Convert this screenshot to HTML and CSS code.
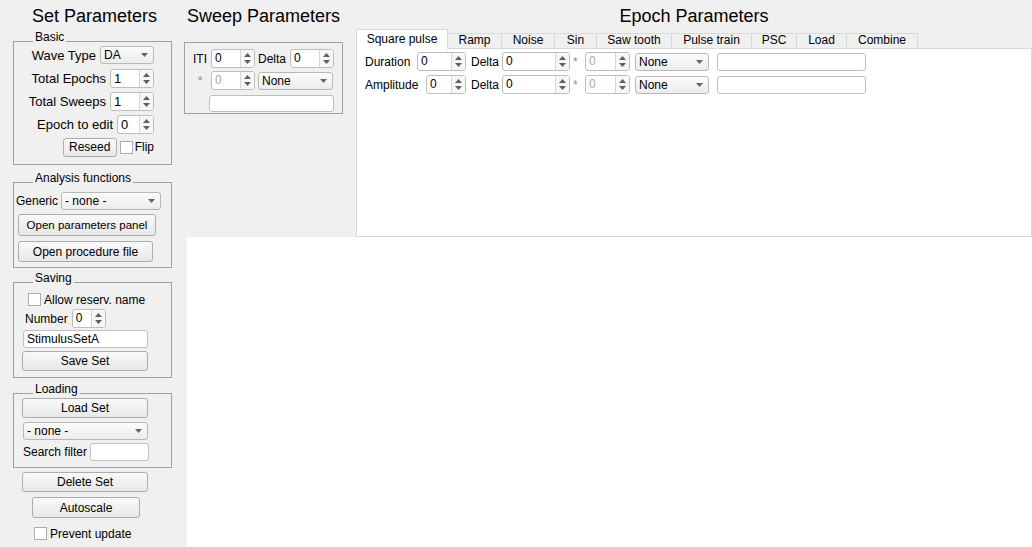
FILE: index.html
```html
<!DOCTYPE html>
<html>
<head>
<meta charset="utf-8">
<title>Set Parameters</title>
<link rel="stylesheet" href="styles.css">
</head>
<body>
<div class="app">
  <aside class="left">
    <h1 class="title">Set Parameters</h1>

    <div class="group g-basic">
      <div class="gtitle">Basic</div>
      <div class="rows">
        <div class="row"><span>Wave Type</span><div class="select w54"><span>DA</span><svg class="caret" width="7" height="4" viewBox="0 0 7 4"><path d="M0 0H7L3.5 4Z" fill="#666"/></svg></div></div>
        <div class="row"><span>Total Epochs</span><div class="spin w44 big"><span class="v">1</span><span class="arr"><svg width="7" height="11" viewBox="0 0 7 11"><path d="M0 4L3.5 0L7 4Z M0 7L3.5 11L7 7Z" fill="#5f5f5f"/></svg></span></div></div>
        <div class="row"><span>Total Sweeps</span><div class="spin w44 big"><span class="v">1</span><span class="arr"><svg width="7" height="11" viewBox="0 0 7 11"><path d="M0 4L3.5 0L7 4Z M0 7L3.5 11L7 7Z" fill="#5f5f5f"/></svg></span></div></div>
        <div class="row"><span>Epoch to edit</span><div class="spin w37 big"><span class="v">0</span><span class="arr"><svg width="7" height="11" viewBox="0 0 7 11"><path d="M0 4L3.5 0L7 4Z M0 7L3.5 11L7 7Z" fill="#5f5f5f"/></svg></span></div></div>
        <div class="row row5"><button class="btn w54 h19">Reseed</button><span class="cb"></span><span class="flip">Flip</span></div>
      </div>
    </div>

    <div class="group g-ana">
      <div class="gtitle">Analysis functions</div>
      <div class="body ana-body">
        <div class="row gen"><span>Generic</span><div class="select w100"><span>- none -</span><svg class="caret" width="7" height="4" viewBox="0 0 7 4"><path d="M0 0H7L3.5 4Z" fill="#666"/></svg></div></div>
        <button class="btn b1">Open parameters panel</button>
        <button class="btn b2">Open procedure file</button>
      </div>
    </div>

    <div class="group g-save">
      <div class="gtitle">Saving</div>
      <div class="body save-body">
        <div class="chk-row cr-allow"><span class="cb"></span><span>Allow reserv. name</span></div>
        <div class="row num"><span>Number</span><div class="spin w34"><span class="v">0</span><span class="arr"><svg width="7" height="11" viewBox="0 0 7 11"><path d="M0 4L3.5 0L7 4Z M0 7L3.5 11L7 7Z" fill="#5f5f5f"/></svg></span></div></div>
        <div class="tbox w125 tb-name">StimulusSetA</div>
        <button class="btn w126 h20 b-save">Save Set</button>
      </div>
    </div>

    <div class="group g-load">
      <div class="gtitle">Loading</div>
      <div class="body load-body">
        <button class="btn w126 h20 b-load">Load Set</button>
        <div class="select w125 sel-load"><span>- none -</span><svg class="caret" width="7" height="4" viewBox="0 0 7 4"><path d="M0 0H7L3.5 4Z" fill="#666"/></svg></div>
        <div class="row search"><span>Search filter</span><div class="tbox w59"></div></div>
      </div>
    </div>

    <button class="btn w126 h20 b-del">Delete Set</button>
    <button class="btn w108 b-auto">Autoscale</button>
    <div class="chk-row cr-prevent"><span class="cb"></span><span>Prevent update</span></div>
  </aside>

  <main class="right">
    <div class="top">
      <section class="sweep">
        <h2 class="title">Sweep Parameters</h2>
        <div class="sgroup">
          <div class="srow"><span class="sl">ITI</span><div class="spin w44"><span class="v">0</span><span class="arr"><svg width="7" height="11" viewBox="0 0 7 11"><path d="M0 4L3.5 0L7 4Z M0 7L3.5 11L7 7Z" fill="#5f5f5f"/></svg></span></div><span class="dl">Delta</span><div class="spin w44"><span class="v">0</span><span class="arr"><svg width="7" height="11" viewBox="0 0 7 11"><path d="M0 4L3.5 0L7 4Z M0 7L3.5 11L7 7Z" fill="#5f5f5f"/></svg></span></div></div>
          <div class="srow r2"><span class="sl star">*</span><div class="spin w44 dis"><span class="v">0</span><span class="arr"><svg width="7" height="11" viewBox="0 0 7 11"><path d="M0 4L3.5 0L7 4Z M0 7L3.5 11L7 7Z" fill="#5f5f5f"/></svg></span></div><div class="select w75 sel-none"><span>None</span><svg class="caret" width="7" height="4" viewBox="0 0 7 4"><path d="M0 0H7L3.5 4Z" fill="#666"/></svg></div></div>
          <div class="tbox w125 h17 st"></div>
        </div>
      </section>

      <section class="epoch">
        <h2 class="title">Epoch Parameters</h2>
        <div class="tabs">
          <div class="tab active t-sq">Square pulse</div>
          <div class="tab t-ramp">Ramp</div>
          <div class="tab t-noise">Noise</div>
          <div class="tab t-sin">Sin</div>
          <div class="tab t-saw">Saw tooth</div>
          <div class="tab t-pulse">Pulse train</div>
          <div class="tab t-psc">PSC</div>
          <div class="tab t-load">Load</div>
          <div class="tab t-comb">Combine</div>
        </div>
        <div class="panel">
          <div class="erow">
            <div class="efirst"><span>Duration</span><div class="spin w49"><span class="v">0</span><span class="arr"><svg width="7" height="11" viewBox="0 0 7 11"><path d="M0 4L3.5 0L7 4Z M0 7L3.5 11L7 7Z" fill="#5f5f5f"/></svg></span></div></div>
            <span class="edl">Delta</span>
            <div class="spin w68 ed"><span class="v">0</span><span class="arr"><svg width="7" height="11" viewBox="0 0 7 11"><path d="M0 4L3.5 0L7 4Z M0 7L3.5 11L7 7Z" fill="#5f5f5f"/></svg></span></div>
            <span class="estar">*</span>
            <div class="spin w45 dis es"><span class="v">0</span><span class="arr"><svg width="7" height="11" viewBox="0 0 7 11"><path d="M0 4L3.5 0L7 4Z M0 7L3.5 11L7 7Z" fill="#5f5f5f"/></svg></span></div>
            <div class="select w74 esel"><span>None</span><svg class="caret" width="7" height="4" viewBox="0 0 7 4"><path d="M0 0H7L3.5 4Z" fill="#666"/></svg></div>
            <div class="tbox w149 etb"></div>
          </div>
          <div class="erow r2">
            <div class="efirst"><span>Amplitude</span><div class="spin w40"><span class="v">0</span><span class="arr"><svg width="7" height="11" viewBox="0 0 7 11"><path d="M0 4L3.5 0L7 4Z M0 7L3.5 11L7 7Z" fill="#5f5f5f"/></svg></span></div></div>
            <span class="edl">Delta</span>
            <div class="spin w68 ed"><span class="v">0</span><span class="arr"><svg width="7" height="11" viewBox="0 0 7 11"><path d="M0 4L3.5 0L7 4Z M0 7L3.5 11L7 7Z" fill="#5f5f5f"/></svg></span></div>
            <span class="estar">*</span>
            <div class="spin w45 dis es"><span class="v">0</span><span class="arr"><svg width="7" height="11" viewBox="0 0 7 11"><path d="M0 4L3.5 0L7 4Z M0 7L3.5 11L7 7Z" fill="#5f5f5f"/></svg></span></div>
            <div class="select w74 esel"><span>None</span><svg class="caret" width="7" height="4" viewBox="0 0 7 4"><path d="M0 0H7L3.5 4Z" fill="#666"/></svg></div>
            <div class="tbox w149 etb"></div>
          </div>
        </div>
      </section>
    </div>
    <div class="canvas"></div>
  </main>
</div>
</body>
</html>
```

FILE: styles.css
```css
* { box-sizing: border-box; }
html, body { margin: 0; padding: 0; }
body {
  width: 1032px;
  height: 547px;
  overflow: hidden;
  background: #fff;
  font-family: "Liberation Sans", Arial, sans-serif;
  font-size: 12px;
  color: #000;
}
.app { display: flex; height: 547px; }

.left { width: 187px; flex: none; height: 547px; background: #f0f0f0; }
.title {
  margin: 0;
  padding-top: 5px;
  font-size: 18px;
  line-height: 22px;
  font-weight: normal;
  white-space: nowrap;
}
.left .title { text-align: center; padding-left: 2px; }

.right { flex: 1; display: flex; flex-direction: column; }
.top { height: 237px; flex: none; background: #f0f0f0; display: flex; }
.canvas { flex: 1; background: #fff; }

/* group boxes */
.group { width: 159px; margin-left: 13px; border: 1px solid #a0a0a0; }
.gtitle {
  width: fit-content;
  margin: -11px 0 0 19px;
  padding: 0 2px;
  background: #f0f0f0;
  font-size: 12px;
  line-height: 12px;
  white-space: nowrap;
}
.g-basic { margin-top: 14px; }
.g-ana { margin-top: 17px; }
.g-save { margin-top: 14px; }
.g-load { margin-top: 15px; }

.row { display: flex; align-items: center; white-space: nowrap; }
.rows {
  margin-top: 2px;
  display: flex;
  flex-direction: column;
  gap: 3px;
  padding: 0 17px 7px 0;
}
.rows .row { justify-content: flex-end; gap: 4px; height: 20px; font-size: 13px; }
.rows .row5 { gap: 0; }
.row5 .cb { margin-left: 3px; }
.row5 .flip { margin-left: 2px; font-size: 12px; }

/* widgets */
.spin {
  display: flex;
  height: 19px;
  border: 1px solid #bdbdbd;
  border-radius: 3px;
  background: #fff;
  font-size: 12px;
  flex: none;
}
.spin.big { font-size: 13px; }
.spin .v { flex: 1; padding-left: 3px; line-height: 17px; overflow: hidden; }
.spin .arr {
  width: 14px;
  flex: none;
  border-left: 1px solid #d6d6d6;
  border-radius: 0 2px 2px 0;
  background: #f7f7f7;
  display: flex;
  align-items: center;
  justify-content: center;
}
.spin .arr svg { display: block; }
.spin.dis .v { color: #a6a6a6; }

.select {
  display: flex;
  align-items: center;
  justify-content: space-between;
  height: 18px;
  flex: none;
  border: 1px solid #b8b8b8;
  border-radius: 3px;
  background: linear-gradient(#fcfcfc, #ececec);
  padding: 0 5px 0 3px;
  font-size: 12px;
  white-space: nowrap;
}
.caret { display: block; flex: none; }

.tbox {
  height: 18px;
  flex: none;
  border: 1px solid #bfbfbf;
  border-radius: 3px;
  background: #fff;
  font-size: 12px;
  line-height: 16px;
  padding-left: 3px;
  white-space: nowrap;
}
.h17 { height: 17px; }

.btn {
  display: flex;
  align-items: center;
  justify-content: center;
  flex: none;
  padding: 0;
  border: 1px solid #acacac;
  border-radius: 3px;
  background: linear-gradient(#f9f9f9, #e8e8e8);
  font-family: inherit;
  font-size: 12px;
  color: #000;
  white-space: nowrap;
}
.h19 { height: 19px; }
.h20 { height: 20px; }

.cb {
  width: 13px;
  height: 13px;
  flex: none;
  border: 1px solid #adadad;
  background: #fff;
}
.chk-row { display: flex; align-items: center; height: 15px; white-space: nowrap; font-size: 12px; }
.chk-row .cb { margin-right: 3px; }

.w34 { width: 34px; }
.w37 { width: 37px; }
.w40 { width: 40px; }
.w44 { width: 44px; }
.w45 { width: 45px; }
.w49 { width: 49px; }
.w54 { width: 54px; }
.w59 { width: 59px; }
.w68 { width: 68px; }
.w74 { width: 74px; }
.w75 { width: 75px; }
.w100 { width: 100px; }
.w108 { width: 108px; }
.w125 { width: 125px; }
.w126 { width: 126px; }
.w149 { width: 149px; }

/* analysis */
.ana-body { padding: 8px 0 5px 2px; }
.gen { height: 18px; gap: 3px; }
.b1 { width: 138px; height: 22px; margin: 4px 0 0 2px; font-size: 11.5px; }
.b2 { width: 135px; height: 21px; margin: 5px 0 0 2px; }

/* saving */
.save-body { padding: 0 0 6px 0; }
.cr-allow { margin: 8px 0 0 14px; }
.num { height: 19px; margin: 2px 0 0 11px; gap: 4px; }
.tb-name { margin: 2px 0 0 9px; }
.b-save { margin: 3px 0 0 8px; }

/* loading */
.load-body { padding: 0 0 6px 0; }
.b-load { margin: 3px 0 0 8px; }
.sel-load { margin: 4px 0 0 9px; }
.search { height: 18px; margin: 3px 0 0 9px; gap: 3px; }

.b-del { margin: 4px 0 0 22px; }
.b-auto { height: 21px; margin: 5px 0 0 32px; }
.cr-prevent { margin: 8px 0 0 34px; }

/* sweep */
.sweep { width: 169px; flex: none; }
.sgroup {
  width: 159px;
  margin: 15px 0 0 -3px;
  border: 1px solid #a0a0a0;
  padding: 6px 0 1px 4px;
}
.srow { display: flex; align-items: center; height: 19px; white-space: nowrap; }
.srow.r2 { margin-top: 3px; }
.sl { width: 22px; text-align: center; font-size: 12px; }
.star { color: #8c8c8c; }
.dl { margin: 0 4px 0 3px; }
.sel-none { margin-left: 3px; }
.st { margin: 5px 0 0 20px; }

/* epoch */
.epoch { flex: 1; }
.epoch .title { text-align: center; }
.tabs {
  display: flex;
  align-items: flex-end;
  height: 19px;
  margin-top: 2px;
}
.tab {
  height: 15px;
  flex: none;
  border-top: 1px solid #d9d9d9;
  border-right: 1px solid #d9d9d9;
  background: #f0f0f0;
  font-size: 12px;
  line-height: 12px;
  text-align: center;
  white-space: nowrap;
}
.tab.active {
  position: relative;
  height: 20px;
  margin-bottom: -1px;
  padding-top: 3px;
  border-left: 1px solid #d9d9d9;
  background: #fff;
}
.t-sq { width: 92px; }
.t-ramp { width: 54px; }
.t-noise { width: 53px; }
.t-sin { width: 42px; }
.t-saw { width: 75px; }
.t-pulse { width: 80px; }
.t-psc { width: 45px; }
.t-load { width: 50px; }
.t-comb { width: 71px; }
.panel {
  height: 189px;
  border: 1px solid #d9d9d9;
  background: #fff;
  padding: 3px 0 0 8px;
}
.erow { display: flex; align-items: center; height: 19px; white-space: nowrap; }
.erow.r2 { margin-top: 4px; }
.efirst { width: 101px; display: flex; align-items: center; justify-content: space-between; flex: none; }
.edl { margin-left: 5px; }
.ed { margin-left: 3px; }
.estar { margin-left: 3px; width: 5px; color: #8c8c8c; }
.es { margin-left: 7px; }
.esel { margin-left: 5px; }
.etb { margin-left: 8px; }
```
